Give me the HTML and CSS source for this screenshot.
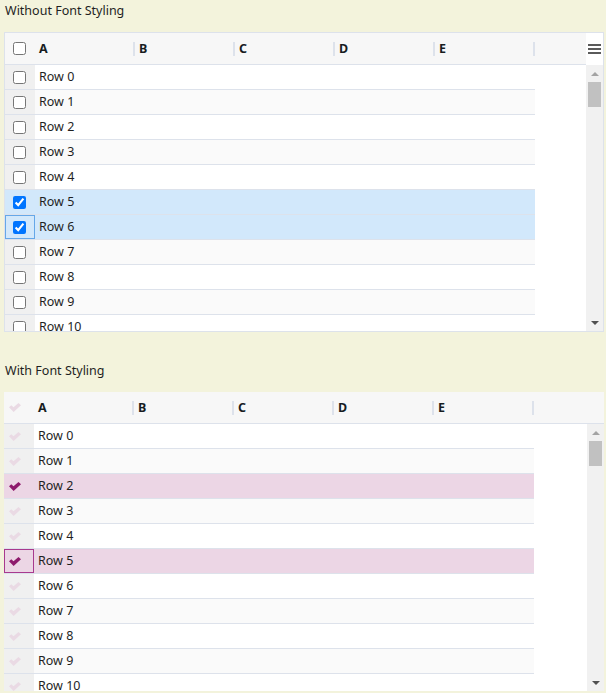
FILE: index.html
```html
<!DOCTYPE html>
<html>
<head>
<meta charset="utf-8">
<link rel="stylesheet" href="styles.css">
</head>
<body>
<section class="sec">
  <div class="title">Without Font Styling</div>
  <div class="grid g1">
    <div class="main">
      <div class="head">
        <div class="hcheck"><input type="checkbox"></div>
        <div class="hcol">A</div><div class="hcol">B</div><div class="hcol">C</div><div class="hcol">D</div><div class="hcol">E</div>
      </div>
      <div class="viewport">
        <div class="row"><div class="ccell"><input type="checkbox"></div><div class="cell">Row 0</div></div>
        <div class="row odd"><div class="ccell"><input type="checkbox"></div><div class="cell">Row 1</div></div>
        <div class="row"><div class="ccell"><input type="checkbox"></div><div class="cell">Row 2</div></div>
        <div class="row odd"><div class="ccell"><input type="checkbox"></div><div class="cell">Row 3</div></div>
        <div class="row"><div class="ccell"><input type="checkbox"></div><div class="cell">Row 4</div></div>
        <div class="row sel"><div class="ccell"><input type="checkbox" checked></div><div class="cell">Row 5</div></div>
        <div class="row sel"><div class="ccell focus"><input type="checkbox" checked></div><div class="cell">Row 6</div></div>
        <div class="row odd"><div class="ccell"><input type="checkbox"></div><div class="cell">Row 7</div></div>
        <div class="row"><div class="ccell"><input type="checkbox"></div><div class="cell">Row 8</div></div>
        <div class="row odd"><div class="ccell"><input type="checkbox"></div><div class="cell">Row 9</div></div>
        <div class="row"><div class="ccell"><input type="checkbox"></div><div class="cell">Row 10</div></div>
      </div>
    </div>
    <div class="side">
      <div class="menu"><span></span><span></span><span></span></div>
      <div class="sbar">
        <div class="sbtn"><i class="up"></i></div>
        <div class="thumb"></div>
        <div class="sfill"></div>
        <div class="sbtn"><i class="down"></i></div>
      </div>
    </div>
  </div>
</section>

<section class="sec sec2">
  <div class="title">With Font Styling</div>
  <div class="grid g2">
    <div class="head">
      <div class="hcheck"><svg class="ck" viewBox="0 0 12 9"><path d="M0 4.3 L2.3 2.3 L4.5 4.3 L9.5 0 L12 2.3 L4.6 9 Z"/></svg></div>
      <div class="hcol">A</div><div class="hcol">B</div><div class="hcol">C</div><div class="hcol">D</div><div class="hcol">E</div>
    </div>
    <div class="body2">
      <div class="viewport">
        <div class="row"><div class="ccell"><svg class="ck" viewBox="0 0 12 9"><path d="M0 4.3 L2.3 2.3 L4.5 4.3 L9.5 0 L12 2.3 L4.6 9 Z"/></svg></div><div class="cell">Row 0</div></div>
        <div class="row odd"><div class="ccell"><svg class="ck" viewBox="0 0 12 9"><path d="M0 4.3 L2.3 2.3 L4.5 4.3 L9.5 0 L12 2.3 L4.6 9 Z"/></svg></div><div class="cell">Row 1</div></div>
        <div class="row pink"><div class="ccell"><svg class="ck on" viewBox="0 0 12 9"><path d="M0 4.3 L2.3 2.3 L4.5 4.3 L9.5 0 L12 2.3 L4.6 9 Z"/></svg></div><div class="cell">Row 2</div></div>
        <div class="row odd"><div class="ccell"><svg class="ck" viewBox="0 0 12 9"><path d="M0 4.3 L2.3 2.3 L4.5 4.3 L9.5 0 L12 2.3 L4.6 9 Z"/></svg></div><div class="cell">Row 3</div></div>
        <div class="row"><div class="ccell"><svg class="ck" viewBox="0 0 12 9"><path d="M0 4.3 L2.3 2.3 L4.5 4.3 L9.5 0 L12 2.3 L4.6 9 Z"/></svg></div><div class="cell">Row 4</div></div>
        <div class="row pink"><div class="ccell pfocus"><svg class="ck on" viewBox="0 0 12 9"><path d="M0 4.3 L2.3 2.3 L4.5 4.3 L9.5 0 L12 2.3 L4.6 9 Z"/></svg></div><div class="cell">Row 5</div></div>
        <div class="row"><div class="ccell"><svg class="ck" viewBox="0 0 12 9"><path d="M0 4.3 L2.3 2.3 L4.5 4.3 L9.5 0 L12 2.3 L4.6 9 Z"/></svg></div><div class="cell">Row 6</div></div>
        <div class="row odd"><div class="ccell"><svg class="ck" viewBox="0 0 12 9"><path d="M0 4.3 L2.3 2.3 L4.5 4.3 L9.5 0 L12 2.3 L4.6 9 Z"/></svg></div><div class="cell">Row 7</div></div>
        <div class="row"><div class="ccell"><svg class="ck" viewBox="0 0 12 9"><path d="M0 4.3 L2.3 2.3 L4.5 4.3 L9.5 0 L12 2.3 L4.6 9 Z"/></svg></div><div class="cell">Row 8</div></div>
        <div class="row odd"><div class="ccell"><svg class="ck" viewBox="0 0 12 9"><path d="M0 4.3 L2.3 2.3 L4.5 4.3 L9.5 0 L12 2.3 L4.6 9 Z"/></svg></div><div class="cell">Row 9</div></div>
        <div class="row"><div class="ccell"><svg class="ck" viewBox="0 0 12 9"><path d="M0 4.3 L2.3 2.3 L4.5 4.3 L9.5 0 L12 2.3 L4.6 9 Z"/></svg></div><div class="cell">Row 10</div></div>
      </div>
      <div class="sbar">
        <div class="sbtn"><i class="up"></i></div>
        <div class="thumb"></div>
        <div class="sfill"></div>
        <div class="sbtn"><i class="down"></i></div>
      </div>
    </div>
  </div>
</section>
</body>
</html>
```

FILE: styles.css
```css
html, body {
  margin: 0;
  padding: 0;
  background: #f3f3dc;
}
body {
  font-family: "Noto Sans", "Open Sans", sans-serif;
  font-size: 12.5px;
  color: #1f1f1f;
  width: 606px;
  height: 693px;
  overflow: hidden;
}
.sec {
  display: flex;
  flex-direction: column;
  padding-left: 4px;
}
.sec2 {
  margin-top: 28px;
}
.title {
  height: 32px;
  box-sizing: border-box;
  padding: 3px 0 0 1px;
  line-height: 16px;
}
.grid {
  width: 600px;
  box-sizing: border-box;
  background: #fff;
  overflow: hidden;
}
.g1 {
  height: 300px;
  border: 1px solid #dde2eb;
  display: flex;
}
.g2 {
  height: 299px;
  display: flex;
  flex-direction: column;
}
.main {
  flex: 1;
  display: flex;
  flex-direction: column;
  min-width: 0;
}
.head {
  height: 32px;
  flex: none;
  box-sizing: border-box;
  border-bottom: 1px solid #dde2eb;
  background: #f7f7f7;
  display: flex;
  align-items: center;
  font-weight: bold;
  color: #181d1f;
}
.hcheck {
  width: 30px;
  height: 100%;
  flex: none;
  display: flex;
  align-items: center;
  padding-left: 8px;
  box-sizing: border-box;
}
.g2 .hcheck, .g2 .ccell {
  padding-left: 5px;
}
.hcol {
  width: 100px;
  flex: none;
  position: relative;
  padding-left: 4px;
  box-sizing: border-box;
}
.hcol::after {
  content: "";
  position: absolute;
  right: 0;
  top: 50%;
  margin-top: -7px;
  width: 2px;
  height: 14px;
  background: #dde2eb;
}
input[type=checkbox] {
  margin: 0;
  width: 13px;
  height: 13px;
}
.viewport {
  flex: 1;
  overflow: hidden;
  min-width: 0;
}
.row {
  width: 530px;
  height: 25px;
  box-sizing: border-box;
  border-bottom: 1px solid #dde2eb;
  display: flex;
  background: #fff;
}
.row.odd { background: #fafafa; }
.row.sel { background: #d2e8fb; }
.row.pink { background: #ecd6e5; }
.ccell {
  width: 30px;
  flex: none;
  background: #f0f0f0;
  display: flex;
  align-items: center;
  padding-left: 8px;
  box-sizing: border-box;
}
.row.sel .ccell { background: #d2e8fb; }
.row.pink .ccell { background: #ecd6e5; }
.ccell.focus { box-shadow: inset 0 0 0 1px #65a7e8; }
.ccell.pfocus { box-shadow: inset 0 0 0 1px #a8398e; }
.cell {
  width: 100px;
  padding-left: 4px;
  line-height: 24px;
  white-space: nowrap;
}
.ck {
  width: 12px;
  height: 9px;
  fill: #eadae4;
}
.ck.on { fill: #8e1a6c; }
.side {
  width: 17px;
  flex: none;
  display: flex;
  flex-direction: column;
}
.side .sbar {
  flex: 1;
}
.menu {
  height: 32px;
  flex: none;
  display: flex;
  flex-direction: column;
  justify-content: center;
  gap: 2px;
  padding: 0 2px 0 2px;
  background: #fff;
}
.menu span {
  height: 2px;
  background: #5a5a5a;
}
.sbar {
  flex: none;
  width: 17px;
  background: #f1f1f1;
  display: flex;
  flex-direction: column;
}
.body2 {
  flex: 1;
  display: flex;
  min-height: 0;
}
.sbtn {
  height: 17px;
  flex: none;
  display: flex;
  align-items: center;
  justify-content: center;
}
.sbtn i {
  width: 0;
  height: 0;
  border-left: 4px solid transparent;
  border-right: 4px solid transparent;
}
.sbtn i.up { border-bottom: 4px solid #a3a3a3; }
.sbtn i.down { border-top: 4px solid #505050; }
.thumb {
  height: 25px;
  margin: 0 2px;
  background: #c1c1c1;
  flex: none;
}
.sfill { flex: 1; }
```
